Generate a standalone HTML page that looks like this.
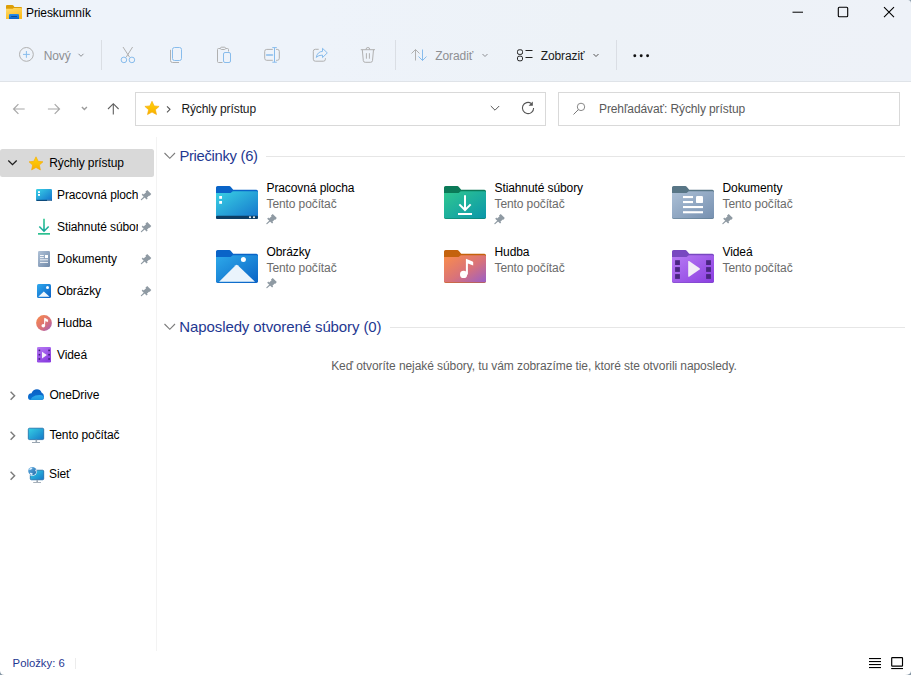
<!DOCTYPE html>
<html><head><meta charset="utf-8">
<style>
*{margin:0;padding:0;box-sizing:border-box}
html,body{width:911px;height:675px;overflow:hidden;background:#fff}
body{position:relative;font-family:"Liberation Sans",sans-serif;font-size:12px;color:#000}
.a{position:absolute}
.t{position:absolute;line-height:1;white-space:nowrap;letter-spacing:-0.1px}
svg{position:absolute;overflow:visible}
#head{position:absolute;left:0;top:0;width:911px;height:81px;background:linear-gradient(90deg,#eef3fa 0%,#eef3fa 35%,#edf2f7 65%,#eef2f8 100%)}
#hline{position:absolute;left:0;top:81px;width:911px;height:1px;background:#dfe3e8}
.sep{position:absolute;width:1px;background:#dadee4}
.box{position:absolute;border:1px solid #d9d9d9;background:#fff}
.dis{color:#8d8f93}
.side{color:#000}
.sub{color:#6b6b6b}
.hdr{color:#1f3891;font-size:14.5px}
</style></head>
<body>
<div id="head"></div>
<div id="hline"></div>

<!-- title bar -->
<svg style="left:0;top:0" width="30" height="30" viewBox="0 0 30 30">
  <defs>
    <linearGradient id="fy" x1="0" y1="0" x2="0.5" y2="1"><stop offset="0" stop-color="#ffdc70"/><stop offset="1" stop-color="#fcbc1c"/></linearGradient>
    <linearGradient id="fb" x1="0" y1="0" x2="0" y2="1"><stop offset="0" stop-color="#2a90ea"/><stop offset="1" stop-color="#0a62c6"/></linearGradient>
  </defs>
  <path d="M6 6 Q6 5 7 5 H12.3 Q13 5 13.4 5.6 L14.4 7 H21 Q22 7 22 8 V18 Q22 19 21 19 H7 Q6 19 6 18 Z" fill="#dc9e08"/>
  <path d="M6 8.8 H12.3 Q12.8 8.8 13.2 8.4 L13.6 8 H21 Q22 8 22 9 V18.2 Q22 19 21.2 19 H6.8 Q6 19 6 18.2 Z" fill="url(#fy)"/>
  <path d="M9 19 V14.9 Q9 13.9 10 13.9 H18 Q19 13.9 19 14.9 V19 Z" fill="url(#fb)"/>
  <rect x="11.2" y="16" width="5.8" height="1" fill="#0c4a94"/>
</svg>
<div class="t" style="left:26px;top:7px">Prieskumník</div>

<!-- window controls -->
<svg style="left:780px;top:0" width="131" height="26">
  <rect x="12.5" y="11.7" width="10.5" height="1" fill="#000"/>
  <rect x="58.3" y="7.3" width="9.4" height="9.4" rx="1" fill="none" stroke="#000" stroke-width="1.1"/>
  <path d="M104 7.2 L114 17.2 M114 7.2 L104 17.2" stroke="#000" stroke-width="1.1"/>
</svg>

<!-- toolbar -->
<svg style="left:0;top:0" width="911" height="81">
  <circle cx="26.4" cy="54.4" r="6.9" fill="none" stroke="#b0b0b0" stroke-width="1"/>
  <path d="M26.4 51 V57.8 M23 54.4 H29.8" stroke="#88bcec" stroke-width="1"/>
  <path d="M78.5 53.8 L81 56.3 L83.5 53.8" fill="none" stroke="#8d8f93" stroke-width="1"/>
  <!-- cut -->
  <path d="M123 47 L129.6 57.2 M132.6 47 L126.2 57.2" stroke="#b0b0b0" stroke-width="1"/>
  <circle cx="123.9" cy="59.9" r="2.8" fill="none" stroke="#88bcec" stroke-width="1"/>
  <circle cx="131.9" cy="59.9" r="2.8" fill="none" stroke="#88bcec" stroke-width="1"/>
  <!-- copy -->
  <rect x="172.5" y="47.5" width="9" height="13" rx="2" fill="none" stroke="#88bcec" stroke-width="1"/>
  <path d="M170.5 49.8 V60.5 Q170.5 62.5 172.5 62.5 H179" fill="none" stroke="#b0b0b0" stroke-width="1"/>
  <!-- paste -->
  <path d="M220 48.5 H218.5 Q217.5 48.5 217.5 49.5 V61.5 Q217.5 62.5 218.5 62.5 H222.5 M226 48.5 H227.5 Q228.5 48.5 228.5 49.5 V51.5" fill="none" stroke="#b0b0b0" stroke-width="1"/>
  <rect x="220.5" y="47.2" width="5" height="2.3" rx="1.1" fill="none" stroke="#b0b0b0" stroke-width="1"/>
  <rect x="223.5" y="52.5" width="7" height="10" rx="1.5" fill="none" stroke="#88bcec" stroke-width="1"/>
  <!-- rename -->
  <path d="M272.8 49.4 H266.7 Q264.7 49.4 264.7 51.4 V58.3 Q264.7 60.3 266.7 60.3 H272.8 M276.1 49.4 H277.3 Q279.3 49.4 279.3 51.4 V58.3 Q279.3 60.3 277.3 60.3 H276.1" fill="none" stroke="#b0b0b0" stroke-width="1"/>
  <path d="M274.5 47.6 V62.2 M272.3 47.6 H276.8 M272.3 62.2 H276.8" stroke="#88bcec" stroke-width="1"/>
  <path d="M266.6 54.9 H272.5" stroke="#88bcec" stroke-width="1.5" stroke-linecap="round"/>
  <!-- share -->
  <path d="M318.7 49.3 H315.3 Q313.3 49.3 313.3 51.3 V59.2 Q313.3 61.2 315.3 61.2 H323.4 Q325.4 61.2 325.4 59.2 V58.2" fill="none" stroke="#b0b0b0" stroke-width="1"/>
  <path d="M316.2 57.4 Q317.5 51.6 322.5 51.4 V48.3 L327.3 52.9 L322.5 57.6 V55.1 Q318.5 55 316.2 57.4 Z" fill="none" stroke="#88bcec" stroke-width="1" stroke-linejoin="round"/>
  <!-- delete -->
  <path d="M360.8 49.7 H375 M366.1 49.7 V49.2 Q366.1 47.5 367.9 47.5 Q369.7 47.5 369.7 49.2 V49.7 M362.3 49.7 L363.3 60.6 Q363.5 62.3 365.2 62.3 H370.6 Q372.3 62.3 372.5 60.6 L373.5 49.7 M366.4 53.2 V58.7 M369.4 53.2 V58.7" fill="none" stroke="#b0b0b0" stroke-width="1"/>
  <!-- sort -->
  <path d="M415.5 49.5 V60.5 M411.5 53.5 L415.5 49.5 L419.5 53.5" fill="none" stroke="#b0b0b0" stroke-width="1"/>
  <path d="M422.5 49.5 V60.5 M418.5 56.5 L422.5 60.5 L426.5 56.5" fill="none" stroke="#88bcec" stroke-width="1"/>
  <path d="M482.5 54 L485 56.5 L487.5 54" fill="none" stroke="#8d8f93" stroke-width="1"/>
  <!-- view -->
  <rect x="517.5" y="49.8" width="5" height="4.6" rx="1.6" fill="none" stroke="#222" stroke-width="1"/>
  <rect x="517.5" y="56.2" width="5" height="4.6" rx="1.6" fill="none" stroke="#222" stroke-width="1"/>
  <path d="M525.5 50.5 H532.5 M525.5 57.5 H532.5" stroke="#222" stroke-width="1"/>
  <path d="M593.5 54 L596 56.5 L598.5 54" fill="none" stroke="#555" stroke-width="1"/>
  <!-- more -->
  <circle cx="634.8" cy="55.8" r="1.45" fill="#111"/>
  <circle cx="641.2" cy="55.8" r="1.45" fill="#111"/>
  <circle cx="647.6" cy="55.8" r="1.45" fill="#111"/>
</svg>
<div class="t dis" style="left:43.7px;top:50px">Nový</div>
<div class="sep" style="left:101px;top:40px;height:30px"></div>
<div class="sep" style="left:394.5px;top:40px;height:30px"></div>
<div class="t dis" style="left:435.3px;top:49.5px">Zoradiť</div>
<div class="t" style="left:540.7px;top:49.8px;color:#1a1a1a">Zobraziť</div>
<div class="sep" style="left:616px;top:40px;height:30px"></div>


<!-- nav row -->
<svg style="left:0;top:0" width="560" height="140">
  <path d="M24.7 109 H13.7 M18.4 104.2 L13.6 109 L18.4 113.8" fill="none" stroke="#a8a8a8" stroke-width="1.2"/>
  <path d="M47.9 109 H59.4 M54.7 104.2 L59.5 109 L54.7 113.8" fill="none" stroke="#a8a8a8" stroke-width="1.2"/>
  <path d="M81.9 107.1 L84.4 109.6 L86.9 107.1" fill="none" stroke="#9c9c9c" stroke-width="1.4"/>
  <path d="M113.3 114.5 V103.8 M108 109 L113.3 103.7 L118.6 109" fill="none" stroke="#5f5f5f" stroke-width="1.1"/>
</svg>
<div class="box" style="left:135px;top:92px;width:411px;height:34px"></div>
<div class="box" style="left:558px;top:92px;width:342px;height:34px"></div>
<svg style="left:0;top:0" width="911" height="140">
  <defs><linearGradient id="star" x1="0" y1="0" x2="0" y2="1"><stop offset="0" stop-color="#ffd20a"/><stop offset="1" stop-color="#f8b000"/></linearGradient></defs>
  <path d="M152 101.3 L154.2 105.9 L159.1 106.4 L155.4 109.7 L156.5 114.6 L152 112.1 L147.5 114.6 L148.6 109.7 L144.9 106.4 L149.8 105.9 Z" fill="url(#star)" stroke="#f6a800" stroke-width="0.6" stroke-linejoin="round"/>
  <path d="M167 106.3 L170 109.3 L167 112.3" fill="none" stroke="#555" stroke-width="1.1"/>
  <path d="M490.8 106 L495 110.2 L499.2 106" fill="none" stroke="#555" stroke-width="1"/>
  <path d="M533.6 107.9 A5.6 5.6 0 1 1 531.3 103.5" fill="none" stroke="#555" stroke-width="1.1"/><path d="M532.8 101.6 V105.8 H528.6 Z" fill="#555"/>
  <circle cx="581" cy="106.9" r="3.7" fill="none" stroke="#7a7a7a" stroke-width="0.9"/>
  <path d="M578.3 109.7 L573.5 114.5" stroke="#7a7a7a" stroke-width="1"/>
</svg>
<div class="t" style="left:181.4px;top:102.8px;color:#1a1a1a">Rýchly prístup</div>
<div class="t" style="left:599px;top:102.8px;color:#5a5a5a">Prehľadávať: Rýchly prístup</div>

<!-- sidebar -->
<div class="a" style="left:156px;top:137px;width:1px;height:514px;background:#f3f3f3"></div>
<div class="a" style="left:0;top:149px;width:154px;height:28px;background:#d9d9d9;border-radius:2.5px"></div>


<svg style="left:0;top:140px" width="156" height="360" viewBox="0 140 156 360">
  <defs>
    <linearGradient id="gdesk" x1="0" y1="0" x2="1" y2="1"><stop offset="0" stop-color="#3ad2e6"/><stop offset="1" stop-color="#1270cc"/></linearGradient>
    <linearGradient id="gdl" x1="0" y1="0" x2="0" y2="1"><stop offset="0" stop-color="#30c890"/><stop offset="1" stop-color="#14a89a"/></linearGradient>
    <linearGradient id="gdoc" x1="0" y1="0" x2="1" y2="1"><stop offset="0" stop-color="#b0c2d8"/><stop offset="1" stop-color="#6f88a8"/></linearGradient>
    <linearGradient id="gpic" x1="0" y1="0" x2="1" y2="1"><stop offset="0" stop-color="#30aaee"/><stop offset="1" stop-color="#0a5ec4"/></linearGradient>
    <linearGradient id="gmus" x1="0" y1="0" x2="1" y2="1"><stop offset="0" stop-color="#fa8c48"/><stop offset="0.6" stop-color="#d8707a"/><stop offset="1" stop-color="#9a5cc8"/></linearGradient>
    <linearGradient id="gvid" x1="0" y1="0" x2="0.6" y2="1"><stop offset="0" stop-color="#b77af4"/><stop offset="1" stop-color="#8a3ee0"/></linearGradient>
    <linearGradient id="gmon" x1="0" y1="0" x2="1" y2="1"><stop offset="0" stop-color="#36d0e4"/><stop offset="1" stop-color="#1478c8"/></linearGradient>
    <linearGradient id="gcl1" x1="0" y1="0" x2="0" y2="1"><stop offset="0" stop-color="#0a60c4"/><stop offset="1" stop-color="#0c72d4"/></linearGradient>
    <linearGradient id="gcl2" x1="0" y1="0" x2="0" y2="1"><stop offset="0" stop-color="#2eacec"/><stop offset="1" stop-color="#1c96e0"/></linearGradient>
    <linearGradient id="star2" x1="0" y1="0" x2="0" y2="1"><stop offset="0" stop-color="#ffd20a"/><stop offset="1" stop-color="#f8b000"/></linearGradient>
  </defs>
  <!-- chevron down -->
  <path d="M8.3 160.5 L12.5 164.7 L16.7 160.5" fill="none" stroke="#1e1e1e" stroke-width="1.3"/>
  <path d="M36 156.8 L38.2 161.3 L43 161.8 L39.4 165.1 L40.4 169.9 L36 167.5 L31.6 169.9 L32.6 165.1 L29 161.8 L33.8 161.3 Z" fill="url(#star2)" stroke="#f6a800" stroke-width="0.6" stroke-linejoin="round"/>
  <!-- desktop -->
  <rect x="36" y="189" width="16" height="12" rx="1.3" fill="url(#gdesk)"/>
  <rect x="36.5" y="199.8" width="15" height="1.2" fill="#0c4a7c"/>
  <rect x="38" y="191.2" width="2" height="1.8" fill="#fff"/>
  <rect x="38" y="194" width="2" height="1.8" fill="#fff"/>
  <rect x="47.5" y="199.8" width="1" height="1" fill="#cde"/><rect x="49.5" y="199.8" width="1" height="1" fill="#cde"/>
  <g transform="translate(140.5 190)"><path d="M6.7 0 L10.8 4.1 L9.1 6 L8.7 5.6 L6.4 7.7 L7.2 8.5 L6.1 9.6 L1.2 4.7 L2.3 3.6 L3.1 4.4 L5.6 2.3 L4.9 1.8 Z" fill="#8f9aa3"/><path d="M3.8 7 L0.9 9.6" stroke="#8f9aa3" stroke-width="1.2" stroke-linecap="round"/></g>
  <!-- download -->
  <path d="M44 218.8 V231 M39.3 226.5 L44 231.2 L48.7 226.5" fill="none" stroke="url(#gdl)" stroke-width="1.6"/>
  <rect x="38" y="233" width="12" height="1.7" fill="#2cc090"/>
  <g transform="translate(140.5 222)"><path d="M6.7 0 L10.8 4.1 L9.1 6 L8.7 5.6 L6.4 7.7 L7.2 8.5 L6.1 9.6 L1.2 4.7 L2.3 3.6 L3.1 4.4 L5.6 2.3 L4.9 1.8 Z" fill="#8f9aa3"/><path d="M3.8 7 L0.9 9.6" stroke="#8f9aa3" stroke-width="1.2" stroke-linecap="round"/></g>
  <!-- documents -->
  <rect x="38" y="251" width="12" height="16" rx="1.2" fill="url(#gdoc)"/>
  <rect x="40" y="255" width="3.8" height="0.9" fill="#fff"/>
  <rect x="40" y="257.2" width="3.8" height="0.9" fill="#fff"/>
  <rect x="45" y="255" width="3" height="3.1" fill="#fff"/>
  <rect x="40" y="259.4" width="8" height="0.9" fill="#fff"/>
  <rect x="40" y="261.9" width="8" height="0.9" fill="#fff"/>
  <g transform="translate(140.5 254)"><path d="M6.7 0 L10.8 4.1 L9.1 6 L8.7 5.6 L6.4 7.7 L7.2 8.5 L6.1 9.6 L1.2 4.7 L2.3 3.6 L3.1 4.4 L5.6 2.3 L4.9 1.8 Z" fill="#8f9aa3"/><path d="M3.8 7 L0.9 9.6" stroke="#8f9aa3" stroke-width="1.2" stroke-linecap="round"/></g>
  <!-- pictures -->
  <rect x="37" y="284" width="14" height="14" rx="1.5" fill="url(#gpic)"/>
  <path d="M38.3 296.8 L43.8 291.4 L49.6 296.8 Z" fill="#eef6fd"/>
  <circle cx="47.5" cy="287.6" r="1.5" fill="#fff"/>
  <g transform="translate(140.5 286)"><path d="M6.7 0 L10.8 4.1 L9.1 6 L8.7 5.6 L6.4 7.7 L7.2 8.5 L6.1 9.6 L1.2 4.7 L2.3 3.6 L3.1 4.4 L5.6 2.3 L4.9 1.8 Z" fill="#8f9aa3"/><path d="M3.8 7 L0.9 9.6" stroke="#8f9aa3" stroke-width="1.2" stroke-linecap="round"/></g>
  <!-- music -->
  <circle cx="44" cy="323" r="7.9" fill="url(#gmus)"/>
  <circle cx="43.3" cy="325.8" r="1.8" fill="#fff"/>
  <path d="M44.6 325.8 V318.3 L47.6 319.8 V321.6 L45.6 320.7" fill="#fff" stroke="#fff" stroke-width="0.9" stroke-linejoin="round"/>
  <!-- videos -->
  <rect x="37" y="347" width="14" height="15.6" rx="1.3" fill="url(#gvid)"/>
  <rect x="38.6" y="349.6" width="1.6" height="1.6" fill="#3e1e78"/><rect x="38.6" y="353.9" width="1.6" height="1.6" fill="#3e1e78"/><rect x="38.6" y="358.2" width="1.6" height="1.6" fill="#3e1e78"/>
  <rect x="48.3" y="349.6" width="1.6" height="1.6" fill="#3e1e78"/><rect x="48.3" y="353.9" width="1.6" height="1.6" fill="#3e1e78"/><rect x="48.3" y="358.2" width="1.6" height="1.6" fill="#3e1e78"/>
  <path d="M42 351.8 V358.4 L46.9 355.1 Z" fill="#f4f0fa"/>
  <!-- chevrons right -->
  <path d="M10.6 391.7 L14.6 395.7 L10.6 399.7" fill="none" stroke="#7c7c7c" stroke-width="1.45"/>
  <path d="M10.6 431.7 L14.6 435.7 L10.6 439.7" fill="none" stroke="#7c7c7c" stroke-width="1.45"/>
  <path d="M10.6 471.7 L14.6 475.7 L10.6 479.7" fill="none" stroke="#7c7c7c" stroke-width="1.45"/>
  <!-- onedrive -->
  <path d="M30.5 400 Q28 400 28 397 Q28 393.5 31.5 393.3 Q33 389.3 37 389.3 Q40.3 389.3 41.5 392.5 Q44 393.5 44 396.5 Q44 400 41 400 Z" fill="url(#gcl1)"/>
  <path d="M30.2 400 Q31.5 397 35.5 395.6 Q38.8 394.6 41.8 395.2 Q44 396 44 398 Q43.8 400 41 400 Z" fill="url(#gcl2)"/>
  <!-- this pc -->
  <rect x="28.3" y="428.2" width="15.4" height="11.4" rx="1.2" fill="url(#gmon)" stroke="#0e5c9c" stroke-width="0.7"/>
  <rect x="35.5" y="439.8" width="1.6" height="2.4" fill="#9aa6b2"/>
  <rect x="32" y="442" width="8" height="1" fill="#9aa6b2"/>
  <!-- network -->
  <defs><linearGradient id="gglobe" x1="0" y1="0" x2="1" y2="1"><stop offset="0" stop-color="#62b0e4"/><stop offset="1" stop-color="#246aa8"/></linearGradient></defs>
  <rect x="30.3" y="470.2" width="13.4" height="9.6" rx="1.1" fill="url(#gmon)" stroke="#0e5c9c" stroke-width="0.7"/>
  <rect x="36.4" y="480.1" width="1.6" height="2" fill="#9aa6b2"/>
  <rect x="33.2" y="482" width="7.8" height="1" fill="#a6b0ba"/>
  <circle cx="32.4" cy="471.1" r="4.7" fill="#fff"/>
  <circle cx="32.4" cy="471.1" r="4.2" fill="url(#gglobe)"/>
  <path d="M29 469.3 Q30 467.6 32.3 467.4 Q32.8 468.6 31.2 469.6 Q30 470.2 29 469.3 Z M29.6 473 Q31 472.3 32.6 473.2 Q33 474.6 31.6 475 Q30.2 474.5 29.6 473 Z M35.2 469.3 Q36.3 470 36.5 471.5 Q35.6 471.9 35.2 470.6 Z" fill="#dcefff"/>
</svg>
<div class="t side" style="left:49.2px;top:157.4px">Rýchly prístup</div>
<div class="a" style="left:57px;top:184px;width:81px;height:160px;overflow:hidden">
  <div class="t side" style="left:0;top:4.8px">Pracovná plocha</div>
  <div class="t side" style="left:0;top:36.8px">Stiahnuté súbory</div>
  <div class="t side" style="left:0;top:68.9px">Dokumenty</div>
  <div class="t side" style="left:0;top:100.8px">Obrázky</div>
  <div class="t side" style="left:0;top:132.8px">Hudba</div>
</div>
<div class="t side" style="left:57px;top:348.6px">Videá</div>
<div class="t side" style="left:49.4px;top:388.8px">OneDrive</div>
<div class="t side" style="left:49.4px;top:428.5px">Tento počítač</div>
<div class="t side" style="left:49px;top:468.4px">Sieť</div>

<svg style="left:0;top:0" width="911" height="400">
<path d="M164.5 153 L169.8 158.3 L175 153" fill="none" stroke="#7c7c7c" stroke-width="1.15"/>
<path d="M164.5 324 L169.8 329.3 L175 324" fill="none" stroke="#7c7c7c" stroke-width="1.15"/>
<rect x="266" y="156" width="639" height="1" fill="#e6e6e6"/>
<rect x="390" y="327" width="515" height="1" fill="#e6e6e6"/>
<g transform="translate(216 186)">
  <defs><linearGradient id="f1" x1="0" y1="0" x2="1" y2="1"><stop offset="0" stop-color="#3ad2e4"/><stop offset="1" stop-color="#1474cc"/></linearGradient></defs>
  <path d="M0 1.6 Q0 0 1.6 0 H13.2 Q14.2 0 14.9 0.9 L17.2 3.8 H40.4 Q42 3.8 42 5.4 V31.2 Q42 33 40.2 33 H1.8 Q0 33 0 31.2 Z" fill="#0a64c8"/>
  <path d="M0 7 H13.8 Q14.6 7 15.3 6.4 L16.3 5.6 Q16.9 5.2 17.6 5.2 H40.6 Q42 5.2 42 6.6 V31 Q42 32.4 40.6 32.4 H1.4 Q0 32.4 0 31 Z" fill="url(#f1)"/>
  <rect x="0" y="29.8" width="42" height="3.2" rx="1.2" fill="#0c3d64"/><rect x="3.2" y="10" width="2.8" height="2.8" fill="#fff"/><rect x="3.2" y="15" width="2.8" height="2.8" fill="#fff"/><rect x="33" y="30.4" width="2" height="1.7" fill="#dfe8ef"/><rect x="37" y="30.4" width="2" height="1.7" fill="#dfe8ef"/>
</g><g transform="translate(444 186)">
  <defs><linearGradient id="f2" x1="0" y1="0" x2="1" y2="1"><stop offset="0" stop-color="#30c890"/><stop offset="1" stop-color="#0a96aa"/></linearGradient></defs>
  <path d="M0 1.6 Q0 0 1.6 0 H13.2 Q14.2 0 14.9 0.9 L17.2 3.8 H40.4 Q42 3.8 42 5.4 V31.2 Q42 33 40.2 33 H1.8 Q0 33 0 31.2 Z" fill="#0b7a58"/>
  <path d="M0 7 H13.8 Q14.6 7 15.3 6.4 L16.3 5.6 Q16.9 5.2 17.6 5.2 H40.6 Q42 5.2 42 6.6 V31 Q42 32.4 40.6 32.4 H1.4 Q0 32.4 0 31 Z" fill="url(#f2)"/>
  <path d="M21 9.3 V23.8 M15.3 18.4 L21 24 L26.7 18.4" fill="none" stroke="#fff" stroke-width="2"/><rect x="14" y="27" width="14" height="2" fill="#fff"/>
</g><g transform="translate(672 186)">
  <defs><linearGradient id="f3" x1="0" y1="0" x2="1" y2="1"><stop offset="0" stop-color="#acc0d6"/><stop offset="1" stop-color="#7690b0"/></linearGradient></defs>
  <path d="M0 1.6 Q0 0 1.6 0 H13.2 Q14.2 0 14.9 0.9 L17.2 3.8 H40.4 Q42 3.8 42 5.4 V31.2 Q42 33 40.2 33 H1.8 Q0 33 0 31.2 Z" fill="#587686"/>
  <path d="M0 7 H13.8 Q14.6 7 15.3 6.4 L16.3 5.6 Q16.9 5.2 17.6 5.2 H40.6 Q42 5.2 42 6.6 V31 Q42 32.4 40.6 32.4 H1.4 Q0 32.4 0 31 Z" fill="url(#f3)"/>
  <rect x="11" y="10" width="10" height="2.1" fill="#fff"/><rect x="11" y="15" width="10" height="2.1" fill="#fff"/><rect x="24" y="10" width="7" height="7.1" rx="1.2" fill="#fff"/><rect x="11" y="20" width="20" height="2.1" fill="#fff"/><rect x="11" y="25.2" width="20" height="2.1" fill="#fff"/>
</g><g transform="translate(216 250)">
  <defs><linearGradient id="f4" x1="0" y1="0" x2="1" y2="1"><stop offset="0" stop-color="#2eaaea"/><stop offset="1" stop-color="#0a64c6"/></linearGradient></defs>
  <path d="M0 1.6 Q0 0 1.6 0 H13.2 Q14.2 0 14.9 0.9 L17.2 3.8 H40.4 Q42 3.8 42 5.4 V31.2 Q42 33 40.2 33 H1.8 Q0 33 0 31.2 Z" fill="#0a64c8"/>
  <path d="M0 7 H13.8 Q14.6 7 15.3 6.4 L16.3 5.6 Q16.9 5.2 17.6 5.2 H40.6 Q42 5.2 42 6.6 V31 Q42 32.4 40.6 32.4 H1.4 Q0 32.4 0 31 Z" fill="url(#f4)"/>
  <circle cx="27.4" cy="9.4" r="2.5" fill="#fff"/><path d="M3.1 31.8 L19.7 15.2 Q20.7 14.3 21.7 15.2 L39 31.8 Z" fill="#eaf4fc"/>
</g><g transform="translate(444 250)">
  <defs><linearGradient id="f5" x1="0" y1="0" x2="1" y2="1"><stop offset="0" stop-color="#fb8e4a"/><stop offset="0.55" stop-color="#d8727a"/><stop offset="1" stop-color="#9a5ec8"/></linearGradient></defs>
  <path d="M0 1.6 Q0 0 1.6 0 H13.2 Q14.2 0 14.9 0.9 L17.2 3.8 H40.4 Q42 3.8 42 5.4 V31.2 Q42 33 40.2 33 H1.8 Q0 33 0 31.2 Z" fill="#c4620c"/>
  <path d="M0 7 H13.8 Q14.6 7 15.3 6.4 L16.3 5.6 Q16.9 5.2 17.6 5.2 H40.6 Q42 5.2 42 6.6 V31 Q42 32.4 40.6 32.4 H1.4 Q0 32.4 0 31 Z" fill="url(#f5)"/>
  <circle cx="19.6" cy="24.4" r="3.6" fill="#fff"/><path d="M21.9 24.4 V9.3 Q21.9 8.6 22.6 8.9 L28.6 11.4 Q29.2 11.7 29.2 12.3 V15.4 L23.9 13.4 V24.4 Z" fill="#fff"/>
</g><g transform="translate(672 250)">
  <defs><linearGradient id="f6" x1="0" y1="0" x2="1" y2="1"><stop offset="0" stop-color="#b87cf4"/><stop offset="1" stop-color="#8a3ee0"/></linearGradient></defs>
  <path d="M0 1.6 Q0 0 1.6 0 H13.2 Q14.2 0 14.9 0.9 L17.2 3.8 H40.4 Q42 3.8 42 5.4 V31.2 Q42 33 40.2 33 H1.8 Q0 33 0 31.2 Z" fill="#7848c0"/>
  <path d="M0 7 H13.8 Q14.6 7 15.3 6.4 L16.3 5.6 Q16.9 5.2 17.6 5.2 H40.6 Q42 5.2 42 6.6 V31 Q42 32.4 40.6 32.4 H1.4 Q0 32.4 0 31 Z" fill="url(#f6)"/>
  <rect x="3.1" y="10.2" width="4.8" height="4.8" fill="#4a2682"/><rect x="34.1" y="10.2" width="4.8" height="4.8" fill="#4a2682"/><rect x="3.1" y="17.1" width="4.8" height="4.8" fill="#4a2682"/><rect x="34.1" y="17.1" width="4.8" height="4.8" fill="#4a2682"/><rect x="3.1" y="24.1" width="4.8" height="4.8" fill="#4a2682"/><rect x="34.1" y="24.1" width="4.8" height="4.8" fill="#4a2682"/><path d="M16.2 11.6 Q16.2 10.6 17.1 11.1 L27.6 18.2 Q28.3 18.9 27.6 19.6 L17.1 26.7 Q16.2 27.2 16.2 26.2 Z" fill="#f2eef6"/>
</g><g transform="translate(266 214)"><path d="M6.7 0 L10.8 4.1 L9.1 6 L8.7 5.6 L6.4 7.7 L7.2 8.5 L6.1 9.6 L1.2 4.7 L2.3 3.6 L3.1 4.4 L5.6 2.3 L4.9 1.8 Z" fill="#8f9aa3"/><path d="M3.8 7 L0.9 9.6" stroke="#8f9aa3" stroke-width="1.2" stroke-linecap="round"/></g><g transform="translate(494 214)"><path d="M6.7 0 L10.8 4.1 L9.1 6 L8.7 5.6 L6.4 7.7 L7.2 8.5 L6.1 9.6 L1.2 4.7 L2.3 3.6 L3.1 4.4 L5.6 2.3 L4.9 1.8 Z" fill="#8f9aa3"/><path d="M3.8 7 L0.9 9.6" stroke="#8f9aa3" stroke-width="1.2" stroke-linecap="round"/></g><g transform="translate(722 214)"><path d="M6.7 0 L10.8 4.1 L9.1 6 L8.7 5.6 L6.4 7.7 L7.2 8.5 L6.1 9.6 L1.2 4.7 L2.3 3.6 L3.1 4.4 L5.6 2.3 L4.9 1.8 Z" fill="#8f9aa3"/><path d="M3.8 7 L0.9 9.6" stroke="#8f9aa3" stroke-width="1.2" stroke-linecap="round"/></g><g transform="translate(266 278)"><path d="M6.7 0 L10.8 4.1 L9.1 6 L8.7 5.6 L6.4 7.7 L7.2 8.5 L6.1 9.6 L1.2 4.7 L2.3 3.6 L3.1 4.4 L5.6 2.3 L4.9 1.8 Z" fill="#8f9aa3"/><path d="M3.8 7 L0.9 9.6" stroke="#8f9aa3" stroke-width="1.2" stroke-linecap="round"/></g></svg>

<div class="t hdr" style="left:179.4px;top:148.9px;font-size:14.8px;letter-spacing:-0.3px">Priečinky (6)</div>
<div class="t hdr" style="left:179.3px;top:319.3px;font-size:15px">Naposledy otvorené súbory (0)</div>
<div class="t" style="left:266.5px;top:181.8px;color:#000">Pracovná plocha</div>
<div class="t sub" style="left:266.5px;top:197.8px">Tento počítač</div>
<div class="t" style="left:494.5px;top:181.8px;color:#000">Stiahnuté súbory</div>
<div class="t sub" style="left:494.5px;top:197.8px">Tento počítač</div>
<div class="t" style="left:722.5px;top:181.8px;color:#000">Dokumenty</div>
<div class="t sub" style="left:722.5px;top:197.8px">Tento počítač</div>
<div class="t" style="left:266.5px;top:245.8px;color:#000">Obrázky</div>
<div class="t sub" style="left:266.5px;top:261.8px">Tento počítač</div>
<div class="t" style="left:494.5px;top:245.8px;color:#000">Hudba</div>
<div class="t sub" style="left:494.5px;top:261.8px">Tento počítač</div>
<div class="t" style="left:722.5px;top:245.8px;color:#000">Videá</div>
<div class="t sub" style="left:722.5px;top:261.8px">Tento počítač</div>
<div class="t" style="left:331.2px;top:359.7px;color:#5f5f5f;font-size:12px;letter-spacing:-0.08px">Keď otvoríte nejaké súbory, tu vám zobrazíme tie, ktoré ste otvorili naposledy.</div>

<!-- status bar -->
<div class="t" style="left:12.6px;top:657.8px;color:#1f3891;font-size:11.3px;letter-spacing:0">Položky: 6</div>
<div class="a" style="left:75px;top:658px;width:1px;height:11px;background:#ececec"></div>
<svg style="left:0;top:0" width="911" height="675">
  <rect x="869" y="658" width="12" height="1.1" fill="#000"/>
  <rect x="869" y="661" width="12" height="1.1" fill="#000"/>
  <rect x="869" y="664" width="12" height="1.1" fill="#000"/>
  <rect x="869" y="667" width="12" height="1.1" fill="#000"/>
  <rect x="891.7" y="657.6" width="10.8" height="8.6" rx="0.5" fill="none" stroke="#000" stroke-width="1.15"/>
  <rect x="891.2" y="668" width="11.8" height="1.1" fill="#000"/>
</svg>

<svg style="left:0;top:0" width="911" height="675">
  <path d="M911 671 V675 H905 Q910.6 674.8 911 671 Z" fill="#8798a6"/>
  <path d="M0 671 V675 H4.5 Q0.5 674.8 0 671 Z" fill="#8798a6"/>
  <path d="M908 0 H911 V3 Q910.8 0.3 908 0 Z" fill="#8fa0ae"/>
</svg>
</body></html>
